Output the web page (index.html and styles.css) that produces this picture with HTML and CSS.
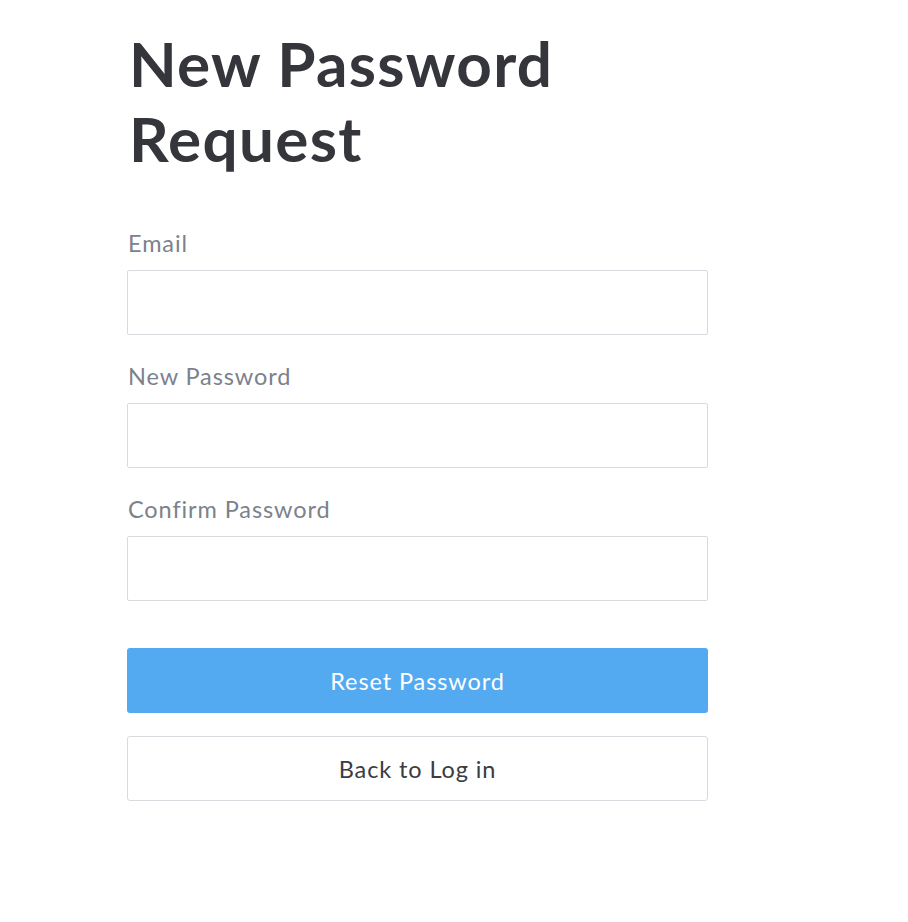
FILE: index.html
```html
<!DOCTYPE html>
<html lang="en">
<head>
<meta charset="utf-8">
<title>New Password Request</title>
<link rel="stylesheet" href="styles.css">
</head>
<body>
<main class="page">
  <h1 class="title">New Password Request</h1>
  <form class="form">
    <div class="field">
      <label class="label" for="email">Email</label>
      <input class="input" id="email" type="email">
    </div>
    <div class="field">
      <label class="label" for="pw">New Password</label>
      <input class="input" id="pw" type="password">
    </div>
    <div class="field">
      <label class="label" for="pw2">Confirm Password</label>
      <input class="input" id="pw2" type="password">
    </div>
    <button class="btn btn-primary" type="button">Reset Password</button>
    <button class="btn btn-secondary" type="button">Back to Log in</button>
  </form>
</main>
</body>
</html>
```
FILE: styles.css
```css
* { box-sizing: border-box; }
html, body { margin: 0; padding: 0; background: #fff; }
body { font-family: Lato, "Open Sans", sans-serif; }
.page {
  width: 581px;
  margin-left: 127px;
  padding-top: 26px;
}
.title {
  margin: 0;
  font-size: 62px;
  line-height: 75px;
  font-weight: 700;
  letter-spacing: 1.3px;
  color: #34363b;
  width: 480px;
  padding-left: 2px;
}
.form {
  display: flex;
  flex-direction: column;
  margin-top: 52px;
}
.field {
  display: flex;
  flex-direction: column;
  margin-bottom: 26px;
}
.label {
  font-size: 23.5px;
  line-height: 30px;
  letter-spacing: 0.9px;
  color: #7c818c;
  margin-bottom: 12px;
  padding-left: 1px;
}
.input {
  height: 65px;
  border: 1px solid #d8dadf;
  border-radius: 2px;
  background: #fff;
  font: inherit;
}
.btn {
  height: 65px;
  border-radius: 3px;
  font-family: inherit;
  font-size: 23.5px;
  letter-spacing: 0.9px;
  cursor: pointer;
}
.btn-primary {
  margin-top: 21px;
  background: #53aaf1;
  border: none;
  color: #fff;
}
.btn-secondary {
  margin-top: 23px;
  background: #fff;
  border: 1px solid #d8dadf;
  color: #3a3c41;
}
```
